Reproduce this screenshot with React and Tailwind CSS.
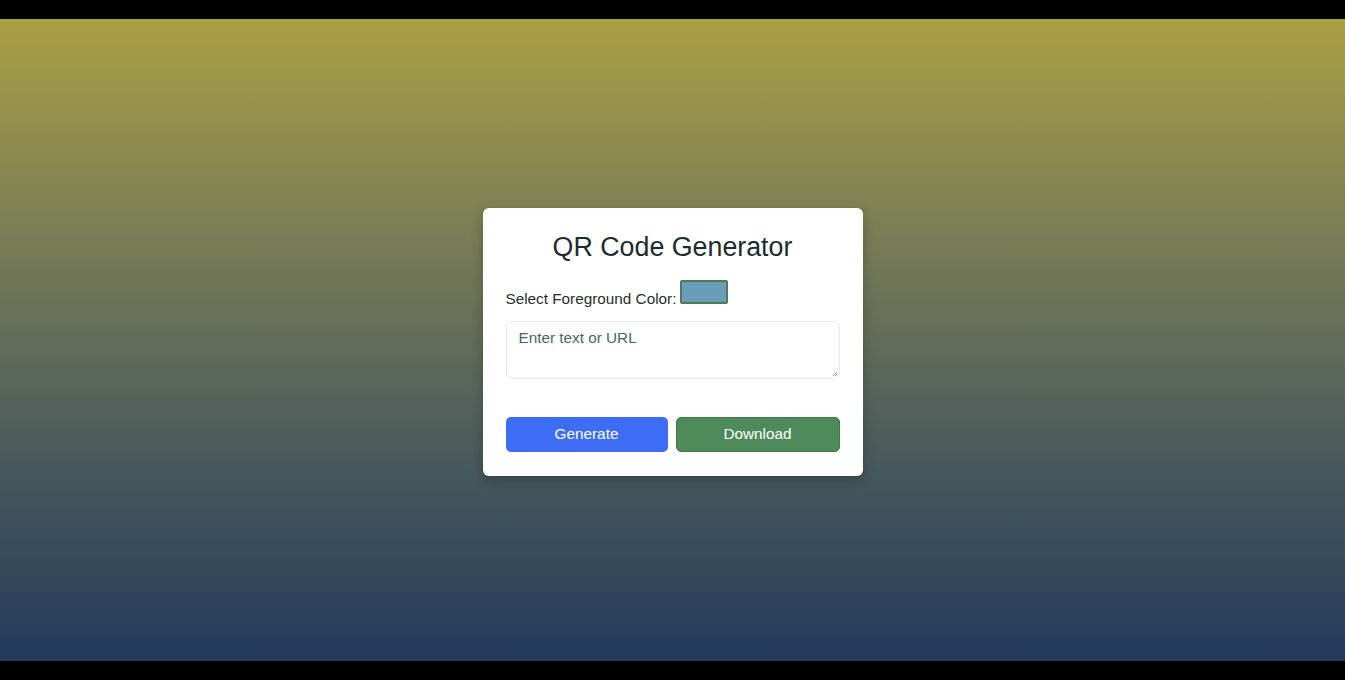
export default function App() {
  return (
    <div className="w-[1345px] h-[680px] bg-black flex flex-col" style={{ fontFamily: '"Liberation Sans", Arial, sans-serif' }}>
      <div className="h-[19px] shrink-0" />
      <div className="flex-1 flex items-start justify-center bg-gradient-to-b from-[#ab9f42] to-[#213a5a]">
        <div className="mt-[189px] w-[380px] bg-white rounded-[6px] shadow-[0_4px_12px_rgba(0,0,0,0.25)] px-[23px] pt-[20px] pb-[24px]">
          <h1 className="text-center text-[26.8px] leading-[38px] text-[#1e2b2e]">QR Code Generator</h1>
          <div className="mt-[14px] flex items-end">
            <span className="text-[15.3px] leading-[18px] text-[#1e3028] mb-[-4px]">Select Foreground Color:</span>
            <div className="ml-[4px] w-[48px] h-[24px] bg-[#699cb9] border-2 border-[#4e7a55] rounded-[2px]" />
          </div>
          <div className="mt-[17px] h-[58px] border border-[#e3e8ee] rounded-[6px] px-[12px] pt-[4px] relative">
            <span className="text-[15.3px] leading-[18px] text-[#3f6a66]">Enter text or URL</span>
            <svg className="absolute right-[1px] bottom-[1px]" width="6" height="6" viewBox="0 0 6 6">
              <path d="M5 1 L1 5 M5 3 L3 5" stroke="#999" strokeWidth="1" />
            </svg>
          </div>
          <div className="mt-[38px] flex gap-[8px]">
            <button className="flex-1 h-[35px] rounded-[5px] bg-[#3e6df5] text-white text-[15.3px]">Generate</button>
            <button className="flex-1 h-[35px] rounded-[5px] bg-[#4e8a5a] text-white text-[15.3px] border border-[#3f7a4c]">Download</button>
          </div>
        </div>
      </div>
      <div className="h-[19px] shrink-0" />
    </div>
  );
}
